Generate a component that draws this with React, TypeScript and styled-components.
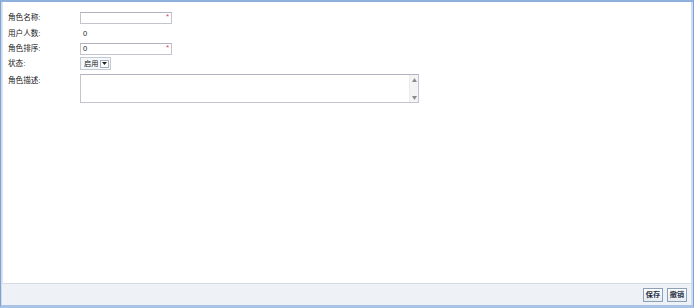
import React from 'react';
import styled, {createGlobalStyle} from "styled-components";

const GlobalStyle = createGlobalStyle`
    html, body {
        margin: 0;
        padding: 0;
        background: #ffffff;
    }

    * {
        box-sizing: border-box;
    }
`

const fontStack = `"Liberation Sans", "Noto Sans CJK SC", sans-serif`

export default function App() {
    return (
        <>
            <GlobalStyle/>
            <Window>
                <Body>
                    <Form>
                        <Row $gap={3}>
                            <Label>角色名称:</Label>
                            <Field>
                                <TextInput $width={92}/>
                                <Required>*</Required>
                            </Field>
                        </Row>
                        <Row $gap={3}>
                            <Label>用户人数:</Label>
                            <PlainValue>0</PlainValue>
                        </Row>
                        <Row $gap={2}>
                            <Label>角色排序:</Label>
                            <Field>
                                <TextInput $width={92}>0</TextInput>
                                <Required>*</Required>
                            </Field>
                        </Row>
                        <Row $gap={4}>
                            <Label>状态:</Label>
                            <Select>
                                <SelectText>启用</SelectText>
                                <SelectButton>
                                    <svg width="5" height="3" viewBox="0 0 5 3">
                                        <path d="M0 0h5L2.5 3z" fill="#222"/>
                                    </svg>
                                </SelectButton>
                            </Select>
                        </Row>
                        <Row $gap={0} $top>
                            <Label $pad={2}>角色描述:</Label>
                            <TextArea>
                                <AreaText/>
                                <ScrollBar>
                                    <svg width="5" height="4" viewBox="0 0 5 4">
                                        <path d="M0 4h5L2.5 0z" fill="#8a8a8a"/>
                                    </svg>
                                    <svg width="5" height="4" viewBox="0 0 5 4">
                                        <path d="M0 0h5L2.5 4z" fill="#8a8a8a"/>
                                    </svg>
                                </ScrollBar>
                            </TextArea>
                        </Row>
                    </Form>
                </Body>
                <Footer>
                    <Button>保存</Button>
                    <Button>撤销</Button>
                </Footer>
            </Window>
        </>
    );
}

const Window = styled.div`
    width: 694px;
    height: 308px;
    display: flex;
    flex-direction: column;
    border: 1px solid #7fa2d0;
    border-top: 2px solid #8fb0dc;
    border-bottom: 3px solid #a9c3e6;
    background: #cfdcee;
    padding: 0 2px 0 1px;
    font-family: ${fontStack};
`

const Body = styled.div`
    flex: 1;
    background: #ffffff;
    border-left: 1px solid #dbe6f4;
    border-bottom: 1px solid #d4dbe4;
    padding: 10px 0 0 5px;
`

const Form = styled.div`
    display: flex;
    flex-direction: column;
`

const Row = styled.div<{ $gap: number, $top?: boolean }>`
    display: flex;
    align-items: ${p => p.$top ? 'flex-start' : 'center'};
    min-height: 12px;
    margin-bottom: ${p => p.$gap}px;
`

const Label = styled.div<{ $pad?: number }>`
    width: 72px;
    flex-shrink: 0;
    padding-top: ${p => p.$pad || 0}px;
    font-size: 7.6px;
    line-height: 10px;
    color: #1a1a1a;
`

const Field = styled.div`
    position: relative;
`

const TextInput = styled.div<{ $width: number }>`
    width: ${p => p.$width}px;
    height: 12px;
    border: 1px solid #c2c5ce;
    border-top-color: #b0b3bf;
    background: #fff;
    padding-left: 2px;
    font-size: 7.6px;
    line-height: 10px;
    color: #1a1a1a;
`

const Required = styled.span`
    position: absolute;
    right: 3px;
    top: 1px;
    font-size: 8px;
    line-height: 8px;
    color: #e0405a;
`

const PlainValue = styled.div`
    height: 13px;
    padding: 2px 0 0 3px;
    font-size: 7.6px;
    line-height: 10px;
    color: #1a1a1a;
`

const Select = styled.div`
    display: flex;
    align-items: center;
    gap: 2px;
    height: 13px;
    border: 1px solid #c3cad4;
    background: #f5f7fa;
    padding: 0 1px 0 3px;
    white-space: nowrap;
`

const SelectText = styled.span`
    font-size: 7.2px;
    line-height: 10px;
    color: #1a1a1a;
`

const SelectButton = styled.span`
    display: flex;
    align-items: center;
    justify-content: center;
    width: 9px;
    height: 8px;
    border: 1px solid #a8b0bc;
    background: #fff;
`

const TextArea = styled.div`
    display: flex;
    width: 339px;
    height: 29px;
    border: 1px solid #c2c5ce;
    border-top-color: #b0b3bf;
    background: #fff;
`

const AreaText = styled.div`
    flex: 1;
`

const ScrollBar = styled.div`
    width: 9px;
    display: flex;
    flex-direction: column;
    justify-content: space-between;
    align-items: center;
    padding: 3px 0 2px;
    background: #f4f4f4;
    border-left: 1px solid #ececec;
`

const Footer = styled.div`
    height: 21px;
    display: flex;
    align-items: center;
    justify-content: flex-end;
    gap: 4px;
    padding-right: 4px;
    background: #eef1f6;
`

const Button = styled.button`
    width: 20px;
    height: 14px;
    padding: 0;
    border: 1px solid #8ca0b8;
    background: linear-gradient(#ffffff, #e6ebf2);
    font-family: ${fontStack};
    font-size: 7.2px;
    font-weight: 700;
    line-height: 12px;
    color: #1f2f44;
    cursor: pointer;
`
